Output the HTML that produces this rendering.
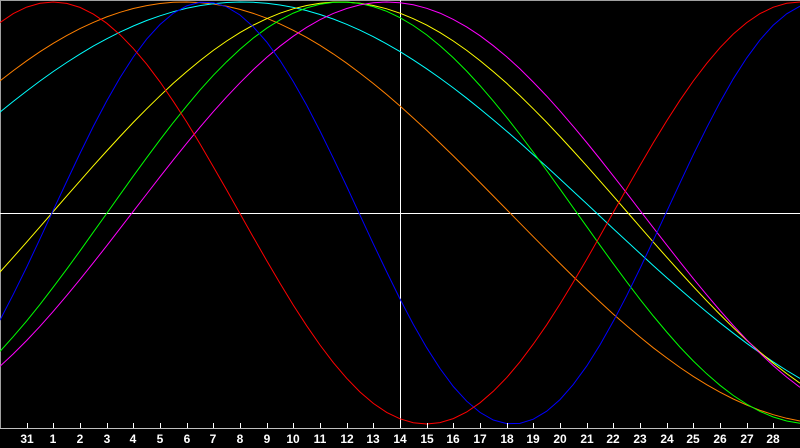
<!DOCTYPE html>
<html><head><meta charset="utf-8"><style>
html,body{margin:0;padding:0;background:#000;width:800px;height:448px;overflow:hidden}
svg{display:block}
text{font-family:"Liberation Sans",sans-serif;font-weight:bold;font-size:12px;fill:#fff}
</style></head><body>
<svg id="s" width="800" height="448" viewBox="0 0 800 448" xmlns="http://www.w3.org/2000/svg">
<rect width="800" height="448" fill="#000"/>
<line x1="0" y1="0.5" x2="800" y2="0.5" stroke="#a0a0a0"/>
<line x1="0.5" y1="0" x2="0.5" y2="428" stroke="#a0a0a0"/>
<line x1="0" y1="428.5" x2="800" y2="428.5" stroke="#c0c0c0"/>
<line x1="0" y1="213.5" x2="800" y2="213.5" stroke="#fff"/>
<line x1="400.5" y1="0" x2="400.5" y2="428" stroke="#fff"/>
<g id="curves" fill="none" stroke-width="1"></g>
<g id="ticks" stroke="#fff"></g>
<g id="labels" text-anchor="middle"></g>
</svg>
<script>
var NS="http://www.w3.org/2000/svg";
var C=213,A=211;
var curves=[
 ["#ff8000",function(x){return Math.cos(2*Math.PI*(x-185)/1300);}],
 ["#00ffff",function(x){return Math.cos(2*Math.PI*(x-242)/1418);}],
 ["#ffff00",function(x){return Math.cos(2*Math.PI*(x-340)/1152);}],
 ["#00ff00",function(x){return Math.cos(2*Math.PI*(x-342)/940);}],
 ["#ff00ff",function(x){return Math.cos(2*Math.PI*(x-387)/1020);}],
 ["#0000ff",function(x){return Math.sin(2*Math.PI*(x-666)/614);}],
 ["#ff0000",function(x){return Math.sin(2*Math.PI*(x-613)/746.7);}]
];
var g=document.getElementById("curves");
curves.forEach(function(c){
 var pts=[];
 for(var k=0;k<=60;k++){var x=k*800/60;pts.push(x.toFixed(1)+","+(C-A*c[1](x)).toFixed(1));}
 var p=document.createElementNS(NS,"polyline");
 p.setAttribute("points",pts.join(" "));p.setAttribute("stroke",c[0]);
 g.appendChild(p);
});
var days=[31,1,2,3,4,5,6,7,8,9,10,11,12,13,14,15,16,17,18,19,20,21,22,23,24,25,26,27,28];
var t=document.getElementById("ticks"),l=document.getElementById("labels");
days.forEach(function(d,i){
 var x=Math.round(26.667*(i+1));
 var ln=document.createElementNS(NS,"line");
 ln.setAttribute("x1",x+0.5);ln.setAttribute("x2",x+0.5);ln.setAttribute("y1",423);ln.setAttribute("y2",428);
 t.appendChild(ln);
 var tx=document.createElementNS(NS,"text");
 tx.setAttribute("x",x);tx.setAttribute("y",443);tx.textContent=d;
 l.appendChild(tx);
});
</script>
</body></html>
